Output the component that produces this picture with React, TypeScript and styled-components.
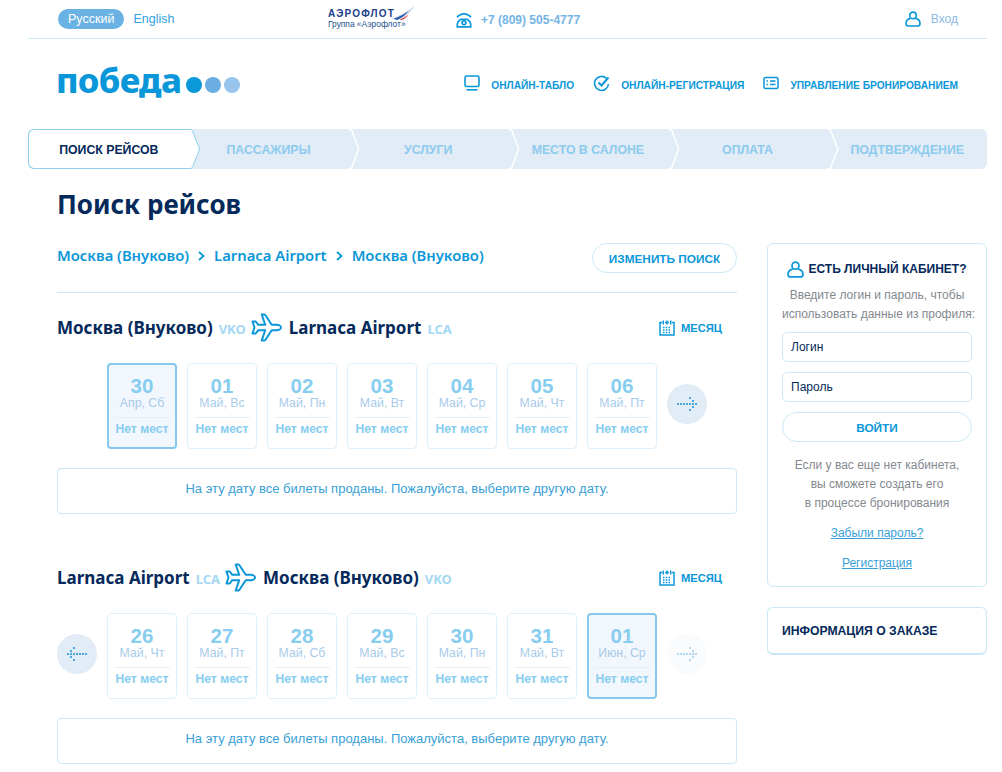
import React from 'react'
import styled, { createGlobalStyle } from 'styled-components'

const blue = '#0a97d9'
const navy = '#04295a'
const pale = '#c9e9f8'
const headFont = `"Noto Sans", "Open Sans", sans-serif`

const GlobalStyle = createGlobalStyle`
  html, body {
    margin: 0;
    padding: 0;
    background: #fff;
    font-family: "Liberation Sans", Arial, sans-serif;
    overflow: hidden;
  }
`
const Page = styled.div`
  width: 959px;
  height: 772px;
  margin-left: 28px;
  overflow: hidden;
`
const TopBar = styled.div`
  height: 38px;
  border-bottom: 1px solid ${pale};
  padding: 0 29px 0 30px;
  display: flex;
  align-items: center;
`
const Langs = styled.div`
  display: flex;
  align-items: center;
  gap: 9px;
  width: 270px;
  font-size: 12.5px;
`
const LangActive = styled.span`
  background: #6ab1e4;
  color: #fff;
  border-radius: 10px;
  height: 20px;
  line-height: 20px;
  padding: 0 10px;
`
const Lang = styled.span`
  color: #2fa0dc;
`
const Aeroflot = styled.div`
  width: 128px;
  color: #1d4f8c;
  font-size: 8.4px;
  line-height: 10px;
  position: relative;
  top: -1px;
`
const AeroflotName = styled.div`
  display: flex;
  align-items: flex-end;
  height: 11px;
  color: #1b3f8b;
  font-size: 10px;
  font-weight: bold;
  letter-spacing: 1.2px;
  line-height: 10px;
`
const Phone = styled.div`
  display: flex;
  align-items: center;
  gap: 9px;
  color: #74b4e6;
  font-size: 12px;
  font-weight: bold;
  flex: 1;
  position: relative;
  top: 1px;
`
const Login = styled.div`
  display: flex;
  align-items: center;
  gap: 10px;
  color: #8cb9e6;
  font-size: 12px;
`
const Header = styled.div`
  height: 90px;
  padding: 0 29px 0 30px;
  display: flex;
  align-items: center;
  justify-content: space-between;
`
const Logo = styled.div`
  display: flex;
  align-items: flex-end;
  gap: 3px;
  position: relative;
  top: -4px;
`
const LogoText = styled.span`
  color: ${blue};
  font-family: ${headFont};
  font-size: 34.5px;
  font-weight: 800;
  line-height: 38px;
  letter-spacing: -0.7px;
  margin: 0 2px 0 -2px;
`
const LogoDot = styled.span<{ $c: string }>`
  width: 16px;
  height: 16px;
  border-radius: 50%;
  background: ${(p) => p.$c};
  margin-bottom: 6px;
`
const Nav = styled.nav`
  display: flex;
  gap: 19px;
  align-items: center;
`
const NavItem = styled.a`
  display: flex;
  align-items: center;
  gap: 11px;
  color: ${blue};
  font-size: 10.2px;
  font-weight: bold;
  position: relative;
  top: 1px;
`
const NavIconBox = styled.span`
  display: flex;
  position: relative;
  top: -2px;
`
const Steps = styled.div`
  display: flex;
  height: 40px;
  background: #e2ecf7;
  border-radius: 6px;
`
const Step = styled.div<{ $active?: boolean }>`
  flex: 1;
  position: relative;
  display: flex;
  align-items: center;
  justify-content: center;
  padding-top: 1px;
  font-size: 12.3px;
  font-weight: bold;
  color: ${(p) => (p.$active ? navy : '#8ccbee')};
  background: ${(p) => (p.$active ? '#fff' : 'transparent')};
  border: ${(p) => (p.$active ? '1px solid #8fd2f0' : '0')};
  border-right: 0;
  border-radius: 6px 0 0 6px;
  box-sizing: border-box;
`
const StepTip = styled.svg`
  position: absolute;
  top: 0;
  left: 100%;
  z-index: 1;
`
const ActiveTip = styled(StepTip)`
  top: -1px;
`
const Title = styled.h1`
  margin: 20px 0 0 29px;
  color: ${navy};
  font-family: ${headFont};
  font-size: 26px;
  font-weight: 700;
  line-height: 30px;
`
const Columns = styled.div`
  display: flex;
  gap: 30px;
  margin: 24px 0 0 29px;
  align-items: flex-start;
`
const Main = styled.main`
  width: 680px;
`
const RouteRow = styled.div`
  display: flex;
  align-items: center;
  justify-content: space-between;
  height: 30px;
  padding-bottom: 19px;
  border-bottom: 1px solid ${pale};
`
const Route = styled.div`
  display: flex;
  align-items: center;
  gap: 9px;
  color: ${blue};
  font-family: ${headFont};
  font-size: 14.8px;
  font-weight: 600;
  position: relative;
  top: -3px;
`
const PillButton = styled.button`
  height: 30px;
  border: 1px solid ${pale};
  border-radius: 15px;
  background: #fff;
  color: ${blue};
  font-family: "Liberation Sans", Arial, sans-serif;
  font-size: 11.8px;
  font-weight: bold;
  padding: 1px 0 0;
`
const ChangeButton = styled(PillButton)`
  width: 145px;
`
const Section = styled.section`
  margin-top: 20px;
  & + & {
    margin-top: 49px;
  }
`
const Direction = styled.div`
  display: flex;
  align-items: center;
  height: 30px;
  box-sizing: border-box;
  padding-bottom: 2px;
`
const City = styled.span<{ $after?: boolean }>`
  color: ${navy};
  font-family: ${headFont};
  font-size: 17px;
  font-weight: 700;
  margin-left: ${(p) => (p.$after ? '7px' : '0')};
`
const Code = styled.span`
  color: #a5d8f3;
  font-family: ${headFont};
  font-size: 13px;
  font-weight: 700;
  margin: 3px 5px 0 6px;
`
const Month = styled.div`
  margin-left: auto;
  margin-right: 15px;
  display: flex;
  align-items: center;
  gap: 6px;
  color: ${blue};
  font-size: 11.2px;
  font-weight: bold;
  position: relative;
  top: 1px;
`
const Dates = styled.div`
  display: flex;
  align-items: center;
  gap: 10px;
  margin-top: 20px;
`
const Arrow = styled.div<{ $faint?: boolean; $hidden?: boolean }>`
  width: 40px;
  height: 40px;
  margin-bottom: 4px;
  border-radius: 50%;
  background: ${(p) => (p.$faint ? '#f3f7fb' : '#e2ecf7')};
  display: flex;
  align-items: center;
  justify-content: center;
  visibility: ${(p) => (p.$hidden ? 'hidden' : 'visible')};
  opacity: ${(p) => (p.$faint ? 0.45 : 1)};
`
const DayCard = styled.div<{ $selected?: boolean }>`
  width: 70px;
  height: 86px;
  box-sizing: border-box;
  border: ${(p) => (p.$selected ? '2px solid #84c9ec' : '1px solid #e1f1fb')};
  background: ${(p) => (p.$selected ? '#f2f7fd' : '#fff')};
  border-radius: 4px;
  padding: ${(p) => (p.$selected ? '11px 5px 0' : '12px 6px 0')};
  text-align: center;
`
const DayNum = styled.div`
  color: #86cdf0;
  font-size: 20.5px;
  font-weight: bold;
  line-height: 20px;
`
const DaySub = styled.div`
  color: #a8cbea;
  font-size: 12.3px;
  line-height: 15px;
  padding-bottom: 6px;
  border-bottom: 1px solid #e4f1fa;
`
const DayState = styled.div`
  color: #86cdf0;
  font-size: 12.2px;
  font-weight: bold;
  line-height: 22px;
  white-space: nowrap;
`
const Notice = styled.div`
  margin-top: 19px;
  height: 46px;
  box-sizing: border-box;
  border: 1px solid ${pale};
  border-radius: 4px;
  padding-bottom: 5px;
  display: flex;
  align-items: center;
  justify-content: center;
  color: #3a9fd6;
  font-size: 13px;
`
const Side = styled.aside`
  width: 220px;
  display: flex;
  flex-direction: column;
  gap: 20px;
`
const LoginCard = styled.div`
  box-sizing: border-box;
  height: 344px;
  border: 1px solid ${pale};
  border-radius: 6px;
  padding: 15px 14px 0;
  text-align: center;
`
const LoginHead = styled.div`
  display: flex;
  align-items: center;
  justify-content: center;
  gap: 4px;
  color: ${navy};
  font-size: 12px;
  font-weight: bold;
  height: 20px;
  white-space: nowrap;
`
const Hint = styled.p`
  margin: 7px 0 8px;
  color: #84898f;
  font-size: 12px;
  line-height: 19px;
  white-space: nowrap;
`
const Field = styled.div`
  height: 30px;
  box-sizing: border-box;
  border: 1px solid ${pale};
  border-radius: 5px;
  margin-bottom: 10px;
  padding-left: 8px;
  color: ${navy};
  font-size: 12px;
  line-height: 28px;
  text-align: left;
`
const LoginButton = styled(PillButton)`
  width: 100%;
  display: block;
`
const SideNote = styled(Hint)`
  margin: 14px 0 0;
`
const SideLink = styled.a`
  display: block;
  margin-top: 11px;
  color: #3a9fd6;
  font-size: 12px;
  line-height: 19px;
  text-decoration: underline;
`
const InfoCard = styled.div`
  box-sizing: border-box;
  height: 48px;
  border: 1px solid ${pale};
  border-bottom-width: 2px;
  border-radius: 6px;
  padding: 0 14px;
  display: flex;
  align-items: center;
  color: ${navy};
  font-size: 12.2px;
  font-weight: bold;
`
const RouteSep = styled.svg`
  flex: none;
  margin-top: 2px;
`

const UserIcon = ({ size = 16 }: { size?: number }) => (
  <svg width={size} height={size} viewBox="0 0 16 16" fill="none" stroke={blue} strokeWidth="1.6">
    <circle cx="8" cy="4.4" r="3.3" />
    <path d="M5.6 7.4C3 8 1 9.6 1 12.6c0 1.5.8 2.4 2.2 2.4h9.6c1.4 0 2.2-.9 2.2-2.4 0-3-2-4.6-4.6-5.2" />
  </svg>
)

const PhoneIcon = () => (
  <svg width="16" height="16" viewBox="0 0 16 16" fill="none" stroke={blue} strokeWidth="1.7">
    <path d="M1 5.200C3 3 5.400 1.800 8 1.800s5 1.200 7 3.400" />
    <path d="M1.300 14.800c-.3-3 .6-6 3.200-7.400h7c2.600 1.400 3.500 4.400 3.200 7.400z" />
    <circle cx="8" cy="10.800" r="1.900" />
  </svg>
)

const MonitorIcon = () => (
  <svg width="16" height="16" viewBox="0 0 16 16" fill="none" stroke={blue} strokeWidth="1.6">
    <rect x="1" y="1" width="14" height="10.500" rx="1.500" />
    <path d="M2.500 14.800h11" />
  </svg>
)

const CheckIcon = () => (
  <svg width="17" height="17" viewBox="0 0 17 17" fill="none" stroke={blue} strokeWidth="1.6">
    <path d="M13.500 3.500A7 7 0 1 0 15.500 9" />
    <path d="M5.500 7.500l3 3L15.500 2.500" strokeWidth="2" />
  </svg>
)

const CardIcon = () => (
  <svg width="16" height="14" viewBox="0 0 16 14" fill="none" stroke={blue} strokeWidth="1.500">
    <rect x="1" y="1.500" width="14" height="11" rx="1.500" />
    <path d="M3.500 5h1.500M3.500 8.500h1.500M7 5h5.500M7 8.500h5.500" />
  </svg>
)

const CalendarIcon = () => (
  <svg width="16" height="16" viewBox="0 0 16 16" fill="none" stroke={blue} strokeWidth="1.500">
    <path d="M3 2.500H1v12.500h14V2.500h-2M6 2.500h4" />
    <path d="M4.300 0.500v4M8 0.500v4M11.700 0.500v4" />
    <path d="M4 7.500h8M4 10h8M4 12.500h8" strokeDasharray="1.500 1.250" strokeWidth="1.400" />
  </svg>
)

const PlaneIcon = () => (
  <svg width="31" height="29" viewBox="0 0 31 29" fill="none" stroke={blue} strokeWidth="2" strokeLinejoin="round">
    <path d="M30 14.500c0-1.600-2.200-2.700-4.300-2.700h-5L14.500 2.300a1.500 1.500 0 0 0-1.200-.8h-2.600l3.500 10.300H7.300L4.800 8.500H1.500l2 6-2 6h3.300l2.500-3.300h6.900L10.700 27.500h2.600c.5 0 1-.3 1.200-.8l6.200-9.500h5c2.100 0 4.300-1.100 4.300-2.700z" />
  </svg>
)

const DotArrow = ({ left }: { left?: boolean }) => (
  <svg width="20" height="14" viewBox="0 0 20 14" fill="#4ba9e0" style={left ? { transform: 'scaleX(-1)' } : undefined}>
    <rect x="0" y="6" width="2" height="2" />
    <rect x="3" y="6" width="2" height="2" />
    <rect x="6" y="6" width="2" height="2" />
    <rect x="9" y="6" width="2" height="2" />
    <rect x="12" y="6" width="2" height="2" />
    <rect x="15" y="6" width="2" height="2" />
    <rect x="18" y="6" width="2" height="2" />
    <rect x="15" y="3" width="2" height="2" />
    <rect x="12" y="0" width="2" height="2" />
    <rect x="15" y="9" width="2" height="2" />
    <rect x="12" y="12" width="2" height="2" />
  </svg>
)

const AeroWing = () => (
  <svg width="26" height="14" viewBox="0 0 20 12" style={{ marginBottom: -1, marginLeft: -5 }}>
    <path d="M0 11C6 9 12 6 20 0 16 6 11 10 5 12z" fill="#c8d4e6" />
    <path d="M2 11C7 9 11 7 15 4 12 8 9 10 5 12z" fill="#2a5ba8" />
    <path d="M7 12c3-2 6-3 8-5-2 3-4 4-6 5z" fill="#d5333f" />
  </svg>
)

const ChevronTip = () => (
  <StepTip width="13" height="40" viewBox="0 0 13 40" fill="none">
    <path d="M0 0h1.500c1 0 1.700.5 2.300 1.400L10.700 20 3.800 38.600c-.6.900-1.300 1.400-2.300 1.400H0" stroke="#fff" strokeWidth="1.500" />
  </StepTip>
)

const ActiveChevron = () => (
  <ActiveTip width="13" height="40" viewBox="0 0 13 40">
    <path d="M0 .5h1c1 0 1.800.4 2.400 1.300l7.200 18.200-7.200 18.200c-.6.900-1.400 1.300-2.400 1.300H0z" fill="#fff" stroke="#8fd2f0" />
    <rect x="0" y="1" width="1" height="38" fill="#fff" />
  </ActiveTip>
)

const RouteChevron = () => (
  <RouteSep width="7" height="10" viewBox="0 0 7 10" fill="none" stroke={blue} strokeWidth="1.800">
    <path d="M1 1l4.500 4L1 9" />
  </RouteSep>
)

type Day = { num: string; sub: string; selected?: boolean }

const outbound: Day[] = [
  { num: '30', sub: 'Апр, Сб', selected: true },
  { num: '01', sub: 'Май, Вс' },
  { num: '02', sub: 'Май, Пн' },
  { num: '03', sub: 'Май, Вт' },
  { num: '04', sub: 'Май, Ср' },
  { num: '05', sub: 'Май, Чт' },
  { num: '06', sub: 'Май, Пт' },
]
const inbound: Day[] = [
  { num: '26', sub: 'Май, Чт' },
  { num: '27', sub: 'Май, Пт' },
  { num: '28', sub: 'Май, Сб' },
  { num: '29', sub: 'Май, Вс' },
  { num: '30', sub: 'Май, Пн' },
  { num: '31', sub: 'Май, Вт' },
  { num: '01', sub: 'Июн, Ср', selected: true },
]
const steps = ['ПОИСК РЕЙСОВ', 'ПАССАЖИРЫ', 'УСЛУГИ', 'МЕСТО В САЛОНЕ', 'ОПЛАТА', 'ПОДТВЕРЖДЕНИЕ']
const soldOut = 'На эту дату все билеты проданы. Пожалуйста, выберите другую дату.'

const DayRow = ({ days, first }: { days: Day[]; first?: boolean }) => (
  <Dates>
    <Arrow $hidden={first}>
      <DotArrow left />
    </Arrow>
    {days.map((d) => (
      <DayCard key={d.num + d.sub} $selected={d.selected}>
        <DayNum>{d.num}</DayNum>
        <DaySub>{d.sub}</DaySub>
        <DayState>Нет мест</DayState>
      </DayCard>
    ))}
    <Arrow $faint={!first}>
      <DotArrow />
    </Arrow>
  </Dates>
)

const Flight = ({ from, fromCode, to, toCode, days, first }: {
  from: string
  fromCode: string
  to: string
  toCode: string
  days: Day[]
  first?: boolean
}) => (
  <Section>
    <Direction>
      <City>{from}</City>
      <Code>{fromCode}</Code>
      <PlaneIcon />
      <City $after>{to}</City>
      <Code>{toCode}</Code>
      <Month>
        <CalendarIcon />
        МЕСЯЦ
      </Month>
    </Direction>
    <DayRow days={days} first={first} />
    <Notice>{soldOut}</Notice>
  </Section>
)

const App = () => (
  <Page>
    <GlobalStyle />
    <TopBar>
      <Langs>
        <LangActive>Русский</LangActive>
        <Lang>English</Lang>
      </Langs>
      <Aeroflot>
        <AeroflotName>
          АЭРОФЛОТ
          <AeroWing />
        </AeroflotName>
        Группа «Аэрофлот»
      </Aeroflot>
      <Phone>
        <PhoneIcon />
        +7 (809) 505-4777
      </Phone>
      <Login>
        <UserIcon />
        Вход
      </Login>
    </TopBar>
    <Header>
      <Logo>
        <LogoText>победа</LogoText>
        <LogoDot $c="#0a98d8" />
        <LogoDot $c="#6aaee2" />
        <LogoDot $c="#98c3ea" />
      </Logo>
      <Nav>
        <NavItem>
          <NavIconBox>
            <MonitorIcon />
          </NavIconBox>
          ОНЛАЙН-ТАБЛО
        </NavItem>
        <NavItem>
          <NavIconBox>
            <CheckIcon />
          </NavIconBox>
          ОНЛАЙН-РЕГИСТРАЦИЯ
        </NavItem>
        <NavItem>
          <NavIconBox>
            <CardIcon />
          </NavIconBox>
          УПРАВЛЕНИЕ БРОНИРОВАНИЕМ
        </NavItem>
      </Nav>
    </Header>
    <Steps>
      {steps.map((s, i) => (
        <Step key={s} $active={i === 0}>
          {s}
          {i === 0 && <ActiveChevron />}
          {i > 0 && i < 5 && <ChevronTip />}
        </Step>
      ))}
    </Steps>
    <Title>Поиск рейсов</Title>
    <Columns>
      <Main>
        <RouteRow>
          <Route>
            <span>Москва (Внуково)</span>
            <RouteChevron />
            <span>Larnaca Airport</span>
            <RouteChevron />
            <span>Москва (Внуково)</span>
          </Route>
          <ChangeButton>ИЗМЕНИТЬ ПОИСК</ChangeButton>
        </RouteRow>
        <Flight from="Москва (Внуково)" fromCode="VKO" to="Larnaca Airport" toCode="LCA" days={outbound} first />
        <Flight from="Larnaca Airport" fromCode="LCA" to="Москва (Внуково)" toCode="VKO" days={inbound} />
      </Main>
      <Side>
        <LoginCard>
          <LoginHead>
            <UserIcon size={17} />
            ЕСТЬ ЛИЧНЫЙ КАБИНЕТ?
          </LoginHead>
          <Hint>
            Введите логин и пароль, чтобы
            <br />
            использовать данные из профиля:
          </Hint>
          <Field>Логин</Field>
          <Field>Пароль</Field>
          <LoginButton>ВОЙТИ</LoginButton>
          <SideNote>
            Если у вас еще нет кабинета,
            <br />
            вы сможете создать его
            <br />в процессе бронирования
          </SideNote>
          <SideLink>Забыли пароль?</SideLink>
          <SideLink>Регистрация</SideLink>
        </LoginCard>
        <InfoCard>ИНФОРМАЦИЯ О ЗАКАЗЕ</InfoCard>
      </Side>
    </Columns>
  </Page>
)

export default App
